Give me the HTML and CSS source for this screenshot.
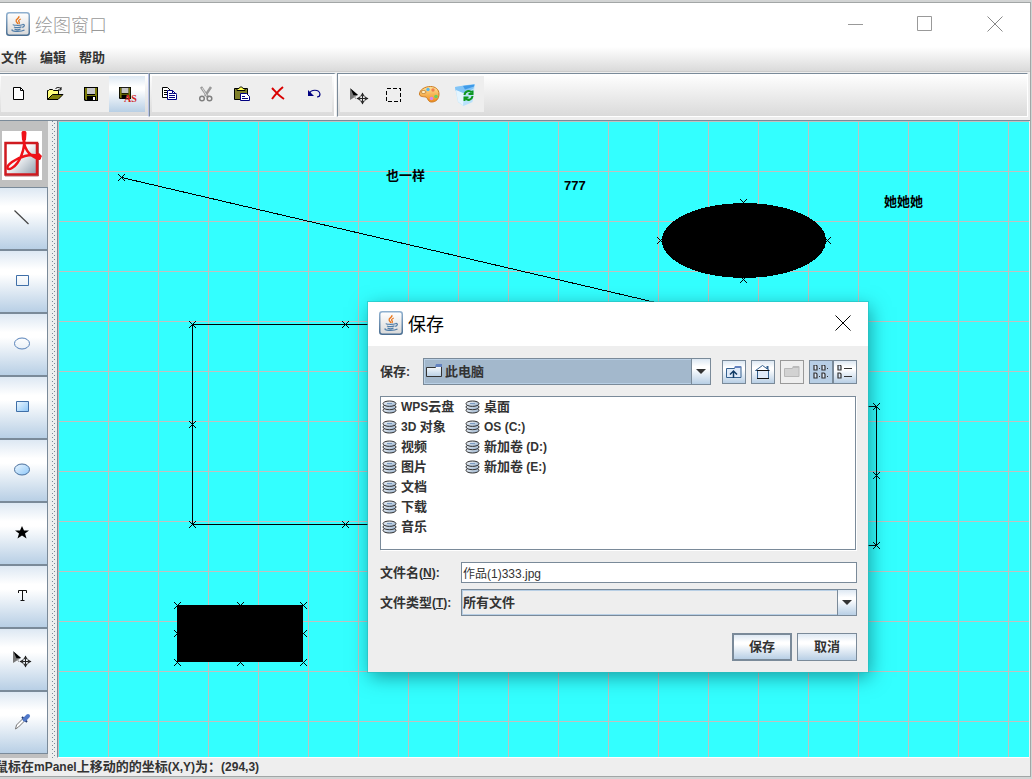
FILE: index.html
```html
<!DOCTYPE html>
<html lang="zh-CN">
<head>
<meta charset="utf-8">
<meta name="viewport" content="width=device-width, initial-scale=1">
<title>绘图窗口</title>
<link rel="stylesheet" href="styles.css">
</head>
<body>
<svg class="defs" width="0" height="0" aria-hidden="true">
  <defs>
    <linearGradient id="g-steel" x1="0" y1="0" x2="0" y2="1"><stop offset="0" stop-color="#8fb0cf"/><stop offset="1" stop-color="#4a6e92"/></linearGradient>
    <linearGradient id="g-tile" x1="0" y1="0" x2="0" y2="1"><stop offset="0" stop-color="#fff"/><stop offset="1" stop-color="#d8d8d8"/></linearGradient>
    <linearGradient id="g-folder" x1="0" y1="0" x2="0" y2="1"><stop offset="0" stop-color="#fff"/><stop offset="1" stop-color="#b8cfe5"/></linearGradient>
    <linearGradient id="g-sky" x1="0" y1="0" x2="1" y2="1"><stop offset="0" stop-color="#eef8ff"/><stop offset="1" stop-color="#8cc6f8"/></linearGradient>
    <linearGradient id="g-pdf" x1="0" y1="0" x2="1" y2="1"><stop offset=".4" stop-color="#fff"/><stop offset="1" stop-color="#8d9dab"/></linearGradient>
    <linearGradient id="g-disk" x1="0" y1="0" x2="1" y2="1"><stop offset="0" stop-color="#fff"/><stop offset="1" stop-color="#8fabc9"/></linearGradient>
    <linearGradient id="g-orange" x1="0" y1="0" x2="0" y2="1"><stop offset="0" stop-color="#ffe39a"/><stop offset="1" stop-color="#f08a18"/></linearGradient>
    <symbol id="java" viewBox="0 0 24 24">
      <rect x=".75" y=".75" width="22.5" height="22.5" rx="2.5" fill="url(#g-tile)" stroke="url(#g-steel)" stroke-width="1.5"/>
      <path d="M12.8 4c1.5 2.2-3.800 3-2.600 5.400.4.900 1.400 1.300 1.500 2.600M14.800 7c-2.400 1-2.600 2-1.600 3.200.4.600.2 1.200-.4 1.700" fill="none" stroke="#e8751a" stroke-width="1.300"/>
      <path d="M7.500 12.500c-2 .8 6 1.200 9 .2M8 14.900c1.500.9 5.500.9 7.500 0M8.500 17c1.500.8 4.500.8 6 0M6.500 17.600c-3 1.700 8 2.700 12 .4M16.500 12.500c3-.4 2 2.400-.3 2.900" fill="none" stroke="#4e7ca8" stroke-width="1.200"/>
    </symbol>
    <symbol id="move" viewBox="0 0 36 36">
      <path d="M10 12v12l8-5z" fill="#777"/><path d="M10.500 12.500l7.500 6.500-4.500.2z" fill="#000"/><path d="M14 20l2 3" stroke="#999"/>
      <path d="M22.500 17v11M17 22.500h11" stroke="#222" fill="none"/>
      <path d="M20.500 20l2-3.500 2 3.500zM20.500 25l2 3.500 2-3.500zM20 20.500l-3.500 2 3.500 2zM25 20.500l3.500 2-3.500 2z" fill="#222"/>
      <circle cx="22.500" cy="22.500" r="3" fill="none" stroke="#444" stroke-width=".7"/>
    </symbol>
    <symbol id="floppy" viewBox="0 0 14 14">
      <path d="M0 0h14v14h-13l-1-1z" fill="#000"/><path d="M1 1h2v7h8v-7h2v12h-11l-1-1z" fill="#7b7b08"/>
      <rect x="3" y="1" width="8" height="6" fill="#c6c6c6"/><path d="M3 9h9v5h-9z" fill="#000"/><path d="M9 10h2v3h-2z" fill="#fff"/>
    </symbol>
    <symbol id="drive" viewBox="0 0 16 14">
      <ellipse cx="7.500" cy="10.300" rx="6.500" ry="2.700" fill="url(#g-disk)" stroke="#333"/>
      <ellipse cx="7.500" cy="7" rx="6.500" ry="2.700" fill="url(#g-disk)" stroke="#333"/>
      <ellipse cx="7.500" cy="3.700" rx="6.500" ry="2.700" fill="url(#g-disk)" stroke="#333"/>
      <path d="M5 3.500h5" stroke="#7a9ac0"/>
    </symbol>
    <symbol id="x" viewBox="0 0 7 7"><path d="M0 0l7 7M7 0l-7 7" stroke="#000" fill="none"/></symbol>
  </defs>
</svg>

<main class="window">
  <header class="titlebar">
    <svg class="app-icon" width="24" height="24" aria-hidden="true"><use href="#java"/></svg>
    <h1>绘图窗口</h1>
    <div class="window-controls">
      <button type="button" aria-label="最小化"><svg width="16" height="16"><path d="M1 8.500h15" stroke="#999"/></svg></button>
      <button type="button" aria-label="最大化"><svg width="16" height="16"><path d="M.5.5h14v14h-14z" fill="none" stroke="#999"/></svg></button>
      <button type="button" aria-label="关闭"><svg width="16" height="16"><path d="M.5.5l15 15M15.500.5l-15 15" stroke="#888"/></svg></button>
    </div>
  </header>

  <nav class="menubar" aria-label="菜单">
    <button type="button">文件</button><button type="button">编辑</button><button type="button">帮助</button>
  </nav>

  <div class="toolbars">
    <div class="toolbar toolbar-file">
      <button type="button" aria-label="新建"><svg width="36" height="36"><path d="M12.500 11.500h7l3 3v9h-10z" fill="#fff" stroke="#000"/><path d="M19.500 11.500v3h3" fill="none" stroke="#000"/></svg></button>
      <button type="button" aria-label="打开"><svg width="36" height="36"><path d="M10.500 23.500v-9h1l1-1h3l1 1h5v4" fill="#ffff7a" stroke="#000"/><path d="M10.500 23.500l5-5h10.500l-5 5z" fill="#80800a" stroke="#000"/><path d="M18.500 13c1-2 4-2 5.500 0m0-2v3h-3" fill="none" stroke="#000"/></svg></button>
      <button type="button" aria-label="保存"><svg width="36" height="36"><use href="#floppy" x="11" y="11" width="14" height="14"/></svg></button>
      <button type="button" class="is-hot" aria-label="另存为"><svg width="36" height="36"><use href="#floppy" x="10" y="11" width="12" height="12"/><text x="15" y="26" class="as-mark">AS</text></svg></button>
    </div>
    <div class="toolbar toolbar-edit">
      <button type="button" aria-label="复制"><svg width="36" height="36"><path d="M10.500 11.500h5l3 3v7h-8z" fill="#fff" stroke="#000"/><path d="M12 14.500h3M12 16.500h4M12 18.500h4" stroke="#000"/><path d="M15.500 14.500h5l4 4v5h-9z" fill="#fff" stroke="#000080"/><path d="M17 17.500h3M17 19.500h6M17 21.500h6M20.500 14.500v3h4" fill="none" stroke="#000080"/></svg></button>
      <button type="button" disabled aria-label="剪切"><svg width="36" height="36"><path d="M13 11l7 10M23 11l-6 9" stroke="#999" stroke-width="2.500"/><path d="M14 12l5 8" stroke="#ddd"/><circle cx="14" cy="22.500" r="2.300" fill="none" stroke="#808080" stroke-width="1.500"/><circle cx="21.500" cy="22.500" r="2.300" fill="none" stroke="#808080" stroke-width="1.500"/></svg></button>
      <button type="button" aria-label="粘贴"><svg width="36" height="36"><path d="M10.500 12.500h13v11h-13z" fill="#80802a" stroke="#000"/><path d="M13 14.500v-2h2c0-2 4-2 4 0h2v2z" fill="#ffff5a" stroke="#000"/><path d="M16.500 17.500h6l3 3v4h-9z" fill="#fff" stroke="#000080"/><path d="M18 20.500h3M18 22.500h6" stroke="#000080"/></svg></button>
      <button type="button" aria-label="删除"><svg width="36" height="36"><path d="M12 12c3 3 7 8 12 11M23 11c-5 4-8 8-11 12" fill="none" stroke="#d90000" stroke-width="2"/></svg></button>
      <button type="button" aria-label="撤销"><svg width="36" height="36"><path d="M13 18c2-5 10-5 11 0 0 2-1 3-3 3" fill="none" stroke="#000080" stroke-width="1.200"/><path d="M12 14v6h6z" fill="#000080"/></svg></button>
    </div>
    <div class="toolbar toolbar-draw">
      <button type="button" aria-label="移动"><svg width="36" height="36"><use href="#move"/></svg></button>
      <button type="button" aria-label="选取"><svg width="36" height="36"><path d="M10.500 12.500h14v13h-14z" fill="none" stroke="#000" stroke-dasharray="4 2" shape-rendering="crispEdges"/></svg></button>
      <button type="button" aria-label="调色板"><svg width="36" height="36"><path d="M7.500 18c0-4 5-7.500 11-7.500 5 0 8.500 3 8.500 7.500 0 5-3 8-7.500 8-4 0-3-4-6-5-2-.5-6 0-6-3z" fill="url(#g-orange)" stroke="#cc7a20"/><ellipse cx="11.500" cy="16" rx="2.500" ry="1.500" fill="#fff0c8" stroke="#b87828" stroke-width=".8"/><circle cx="16" cy="13.500" r="1.700" fill="#58b8f0"/><circle cx="21" cy="14" r="1.700" fill="#f08050"/><circle cx="24" cy="20.500" r="1.800" fill="#68d060"/><circle cx="19.500" cy="22.500" r="1.800" fill="#d888e8"/></svg></button>
      <button type="button" aria-label="回收站"><svg width="36" height="36"><path d="M7 11l9-1.500 11-1.500-2.500 18-9 4-5.500-4z" fill="#b9e2fb"/><path d="M7 11l12-2 7.500-.5-1 4-9 5-9-3z" fill="#82c4f6"/><path d="M15 10l11.500-1.500-.5 2-9 3z" fill="#3f9ae8"/><path d="M8 14l8 3.500-1 12-5-4z" fill="#e4f5ff"/><path d="M16.500 19c.5-4 5-5 7-2.500M24.500 14.500v3.500h-4M24.500 20c-.5 4-5 5-7 2.500M16.500 25v-3.500h4" fill="none" stroke="#109820" stroke-width="2"/></svg></button>
    </div>
  </div>

  <div class="workspace">
    <aside class="palette" aria-label="绘图工具">
      <button type="button" class="pdf" aria-label="PDF"><svg width="40" height="49"><path fill="#fff" d="M0 0h40v49H0z"/><path d="M3.500 12h31.500v31.500h-31.500z" fill="url(#g-pdf)" stroke="#cf1a20" stroke-width="2.500"/><path d="M3 45h33.500v-33" fill="none" stroke="#8d1018" stroke-opacity=".6"/><path d="M22 3c-2 8 2 19 10 23 5 3 8 1 4-1-7-3-19 1-26 6-7 5-5 9 0 6 7-4 14-18 12-34" fill="none" stroke="#ef1118" stroke-width="2.500"/><path d="M19.500 2c0-3 5-3 5 0l-.5 7h-4zM32 24l5-2 3 3-2 4-5-1z" fill="#ef1118"/></svg></button>
      <button type="button" aria-label="直线"><svg width="36" height="36"><path d="M10.500 11.500l14 13.500" stroke="#444" stroke-width="1.200"/></svg></button>
      <button type="button" aria-label="矩形"><svg width="36" height="36"><path d="M12.500 13.500h12v10h-12z" fill="none" stroke="#3f6fa8"/></svg></button>
      <button type="button" aria-label="椭圆"><svg width="36" height="36"><ellipse cx="18" cy="18.500" rx="7.500" ry="5.500" fill="none" stroke="#5580b8"/></svg></button>
      <button type="button" aria-label="实心矩形"><svg width="36" height="36"><path d="M12.500 13.500h12v10h-12z" fill="url(#g-sky)" stroke="#3f6fa8"/></svg></button>
      <button type="button" aria-label="实心椭圆"><svg width="36" height="36"><ellipse cx="18" cy="18.500" rx="7.500" ry="5.500" fill="url(#g-sky)" stroke="#486e9c"/></svg></button>
      <button type="button" aria-label="星形"><svg width="36" height="36"><path d="M18 12l2 4.500h5l-4 3 1.500 5-4.500-3-4.500 3 1.500-5-4-3h5z" fill="#000"/></svg></button>
      <button type="button" aria-label="文字"><svg width="36" height="36"><path d="M14.500 16v-2.500h8v2.500M18.500 13.500v10M16.500 23.500h4" fill="none" stroke="#111"/></svg></button>
      <button type="button" aria-label="移动图形"><svg width="36" height="36"><use href="#move" x="-1" y="-1"/></svg></button>
      <button type="button" aria-label="取色"><svg width="36" height="36"><path d="M11.500 26l1-4 6-6 2 2-6 6z" fill="#fff" stroke="#777"/><path d="M18 14l5 5" stroke="#223a70" stroke-width="2"/><path d="M20.500 16.500l3.500-3.500" stroke="#5078c8" stroke-width="4" stroke-linecap="round"/></svg></button>
    </aside>
    <div class="splitter"></div>
    <section class="canvas" aria-label="画布">
      <svg width="100%" height="100%">
        <defs><pattern id="grid" width="50" height="50" patternUnits="userSpaceOnUse"><path d="M0 .5h50M.5 0v50" stroke="#c0c0c0" shape-rendering="crispEdges"/></pattern></defs>
        <rect width="100%" height="100%" fill="url(#grid)"/>
        <g fill="none" stroke="#000" shape-rendering="crispEdges">
          <path d="M63.500 56.500L632 189.500"/>
          <path d="M134.500 203.500h306v200h-306z"/>
          <path d="M700.500 285.500h118v139h-118z"/>
        </g>
        <g shape-rendering="crispEdges">
          <use href="#x" x="60" y="53" width="7" height="7"/>
          <use href="#x" x="131" y="200" width="7" height="7"/><use href="#x" x="284" y="200" width="7" height="7"/>
          <use href="#x" x="131" y="300" width="7" height="7"/>
          <use href="#x" x="131" y="400" width="7" height="7"/><use href="#x" x="284" y="400" width="7" height="7"/>
          <use href="#x" x="815" y="282" width="7" height="7"/><use href="#x" x="815" y="351" width="7" height="7"/><use href="#x" x="815" y="421" width="7" height="7"/>
          <use href="#x" x="682" y="78" width="7" height="7"/><use href="#x" x="682" y="155" width="7" height="7"/>
          <use href="#x" x="599" y="116" width="7" height="7"/><use href="#x" x="766" y="116" width="7" height="7"/>
          <ellipse cx="686" cy="119.500" rx="82" ry="37.500"/>
          <use href="#x" x="116" y="481" width="7" height="7"/><use href="#x" x="179" y="481" width="7" height="7"/><use href="#x" x="242" y="481" width="7" height="7"/>
          <use href="#x" x="116" y="509" width="7" height="7"/><use href="#x" x="242" y="509" width="7" height="7"/>
          <use href="#x" x="116" y="538" width="7" height="7"/><use href="#x" x="179" y="538" width="7" height="7"/><use href="#x" x="242" y="538" width="7" height="7"/>
          <rect x="119" y="484" width="126" height="57"/>
        </g>
        <text class="note" x="328" y="59">也一样</text>
        <text class="note" x="506" y="69">777</text>
        <text class="note" x="826" y="85">她她她</text>
      </svg>
    </section>
  </div>

  <footer class="status"><p><span class="han">鼠标在</span>mPanel<span class="han">上移动的的坐标</span>(X,Y)<span class="han">为：</span>(294,3)</p></footer>
</main>

<section class="dialog" role="dialog" aria-labelledby="dialog-title">
  <header class="dialog-title">
    <svg width="24" height="24" aria-hidden="true"><use href="#java"/></svg>
    <h2 id="dialog-title">保存</h2>
    <button type="button" aria-label="关闭"><svg width="16" height="16"><path d="M.5.5l15 15M15.500.5l-15 15" stroke="#000"/></svg></button>
  </header>
  <form class="dialog-body">
    <div class="location">
      <label for="place"><span class="han">保存</span>:</label>
      <div class="combo combo-place">
        <svg class="folder" width="17" height="14" aria-hidden="true"><path d="M.5 3.500h9l2-2h4v11h-15z" fill="url(#g-folder)" stroke="#333"/><path d="M10 0h6v3h-7z" fill="#6382bf"/></svg>
        <select id="place"><option>此电脑</option></select>
        <span class="arrow"><svg width="10" height="5"><path d="M0 0h10l-5 5z" fill="#333"/></svg></span>
      </div>
      <div class="tools">
        <button type="button" aria-label="向上"><svg width="16" height="14"><path d="M.5 3.500h8l2-2h4.500v11h-14.500z" fill="#dfeaf8" stroke="#35618f"/><path d="M9 1h6v2h-7z" fill="#6382bf"/><path d="M7.500 13v-6M4 9.500l3.500-3.500 3.500 3.500" fill="none" stroke="#123c66" stroke-width="1.500"/></svg></button>
        <button type="button" aria-label="主目录"><svg width="16" height="14"><path d="M.5 5.500l7-5 7 5z" fill="#fff" stroke="#35618f"/><path d="M2.500 5.500h11v8h-11z" fill="#dfeaf8" stroke="#35618f"/><path d="M2 13.500h12M2 5.500h12" stroke="#111"/><path d="M12.500 1v3" stroke="#35618f" stroke-width="2"/></svg></button>
        <button type="button" disabled aria-label="新建文件夹"><svg width="16" height="14"><path d="M.5 3.500h8l2-2h4.500v10h-14.500z" fill="#d2d2d2" stroke="#b8b8b8"/><path d="M9 1h6v2h-7z" fill="#bbb"/></svg></button>
        <span class="view">
          <button type="button" class="is-on" aria-label="列表"><svg width="16" height="14"><path d="M1 0h2l1 1v4h-3zM9 0h2l1 1v4h-3zM1 8h2l1 1v4h-3zM9 8h2l1 1v4h-3z" fill="#dfeaf8" stroke="#333" stroke-width="1.200"/><path d="M6 3.500h1M14 3.500h1M6 11.500h1M14 11.500h1" stroke="#333"/></svg></button>
          <button type="button" aria-label="详细信息"><svg width="16" height="14"><path d="M1 0h2l1 1v4h-3zM1 8h2l1 1v4h-3z" fill="#dfeaf8" stroke="#333" stroke-width="1.200"/><path d="M7 3.500h8M7 11.500h8" stroke="#333"/></svg></button>
        </span>
      </div>
    </div>

    <ul class="files">
      <li><svg width="16" height="14"><use href="#drive"/></svg><span>WPS<span class="han">云盘</span></span></li>
      <li><svg width="16" height="14"><use href="#drive"/></svg><span>3D <span class="han">对象</span></span></li>
      <li><svg width="16" height="14"><use href="#drive"/></svg><span class="han">视频</span></li>
      <li><svg width="16" height="14"><use href="#drive"/></svg><span class="han">图片</span></li>
      <li><svg width="16" height="14"><use href="#drive"/></svg><span class="han">文档</span></li>
      <li><svg width="16" height="14"><use href="#drive"/></svg><span class="han">下载</span></li>
      <li><svg width="16" height="14"><use href="#drive"/></svg><span class="han">音乐</span></li>
      <li><svg width="16" height="14"><use href="#drive"/></svg><span class="han">桌面</span></li>
      <li><svg width="16" height="14"><use href="#drive"/></svg><span>OS (C:)</span></li>
      <li><svg width="16" height="14"><use href="#drive"/></svg><span><span class="han">新加卷</span> (D:)</span></li>
      <li><svg width="16" height="14"><use href="#drive"/></svg><span><span class="han">新加卷</span> (E:)</span></li>
    </ul>

    <div class="fields">
      <label for="name"><span class="han">文件名</span>(<u>N</u>):</label>
      <input id="name" type="text" value="作品(1)333.jpg">
      <label for="type"><span class="han">文件类型</span>(<u>T</u>):</label>
      <div class="combo">
        <select id="type"><option>所有文件</option></select>
        <span class="arrow"><svg width="10" height="5"><path d="M0 0h10l-5 5z" fill="#333"/></svg></span>
      </div>
    </div>

    <div class="actions">
      <button type="submit" class="default">保存</button>
      <button type="button">取消</button>
    </div>
  </form>
</section>
</body>
</html>
```

FILE: styles.css
```css
:root {
  --edge: #7a8a99;
  --panel: #eeeeee;
  --text: #333333;
  --metal: linear-gradient(#dde8f3, #ffffff 30%, #ffffff 38%, #b8cfe5);
  --bar: linear-gradient(#ffffff, #dadada);
}

* { box-sizing: border-box; }

body {
  margin: 0;
  height: 100vh;
  padding: 2px 1px 2px 0;
  background: #d2d4d4;
  color: var(--text);
  font: bold 12px/16px "Liberation Sans", "Noto Sans CJK SC", sans-serif;
  overflow: hidden;
}

button, input, select { font: inherit; color: inherit; margin: 0; border-radius: 0; }
button { padding: 0; border: 0; background: none; }
svg { display: block; flex: none; }
.defs { position: absolute; }
.han { font-size: 13px; }

/* Main window */
.window {
  display: flex;
  flex-direction: column;
  height: 100%;
  background: var(--panel);
  border: 1px solid #a2a6a6;
  border-left: 0;
}

.titlebar {
  display: flex;
  align-items: center;
  height: 44px;
  padding: 0 0 2px 6px;
  gap: 5px;
  background: #fff;
}
h1, h2 {
  margin: 0;
  font: 400 18px/24px "Noto Sans CJK SC", sans-serif;
}
h1 { color: #999; font-weight: 300; }
h2 { color: #000; }
.window-controls { display: flex; margin-left: auto; }
.window-controls button { width: 70px; display: grid; place-items: center; }

.menubar {
  display: flex;
  height: 25px;
  gap: 13px;
  padding-left: 1px;
  background: var(--bar);
  border-bottom: 1px solid #ccc;
}
.menubar button { font-size: 13px; height: 22px; }

.toolbars { display: flex; padding: 1px 2px 3px 0; }
.toolbar {
  display: flex;
  height: 44px;
  padding-top: 2px;
  background: var(--bar);
  border-top: 1px solid var(--edge);
  border-bottom: 1px solid #fff;
}
.toolbar button { width: 36px; height: 36px; background: var(--panel); }
.toolbar button.is-hot { background: var(--metal); }
.toolbar-file { padding-left: 1px; padding-right: 3px; border-right: 1px solid #b9c3e8; }
.toolbar-edit { padding-left: 2px; padding-right: 2px; border-left: 1px solid var(--edge); border-right: 2px solid #fff; }
.toolbar-draw { flex: 1; padding-left: 2px; margin-left: 1px; border-left: 1px solid var(--edge); border-right: 1px solid #fff; }
.as-mark { font: bold 10px "Liberation Serif", serif; fill: #d02020; }

.workspace {
  flex: 1;
  min-height: 0;
  display: flex;
  padding-right: 1px;
  border-top: 1px solid var(--edge);
}
.palette {
  flex: none;
  display: flex;
  flex-direction: column;
  width: 48px;
  background: #c0c0c0;
  overflow: hidden;
}
.palette button {
  flex: none;
  display: grid;
  place-items: center;
  height: 63px;
  padding: 0 3px 3px 0;
  background: var(--metal);
  border: solid var(--edge);
  border-width: 1px 1px 1px 0;
}
.palette .pdf { height: 66px; background: none; border: 0; padding: 2px 4px 0 0; }

/* Staggered grip dots */
.splitter {
  flex: none;
  width: 9px;
  margin-left: 1px;
  padding: 0 2px 0 3px;
  background:
    conic-gradient(from 270deg at 1px 1px, var(--edge) 25%, transparent 0) 0 0 / 4px 4px content-box,
    conic-gradient(from 270deg at 1px 1px, var(--edge) 25%, transparent 0) 2px 2px / 4px 4px content-box;
}
.canvas {
  flex: 1;
  min-width: 0;
  background: #33ffff;
  border-bottom: 1px solid #fff;
  border-left: 1px solid var(--edge);
  margin-left: -1px;
}
.note {
  font: bold 13px "Liberation Sans", "Noto Sans CJK SC", sans-serif;
  fill: #000;
}

.status { height: 18px; overflow: hidden; }
.status p { margin: 0 0 0 -5px; line-height: 18px; white-space: nowrap; }

/* Save dialog floating over the window */
.dialog {
  position: absolute;
  left: 368px;
  top: 302px;
  width: 500px;
  background: var(--panel);
  box-shadow: 0 0 0 1px rgba(40, 190, 190, .6), 2px 5px 18px rgba(0, 60, 70, .5);
}
.dialog-title {
  display: flex;
  align-items: center;
  gap: 5px;
  height: 44px;
  padding: 0 17px 2px 11px;
  background: #fff;
}
.dialog-title button { margin-left: auto; }
.dialog-body { padding: 12px 11px 11px 12px; }

.location { display: flex; align-items: center; margin-bottom: 11px; }
.location label { width: 43px; }
.tools { display: flex; gap: 5px; margin-left: 11px; }
.tools button {
  display: grid;
  place-items: center;
  width: 24px;
  height: 24px;
  background: var(--metal);
  border: 1px solid var(--edge);
}
.tools button:disabled { background: var(--panel); border-color: #999; }
.tools .is-on { background: #b8cfe5; }
.view { display: flex; }

.combo { position: relative; height: 27px; }
.combo-place { flex: 1; }
.combo select {
  appearance: none;
  display: block;
  width: 100%;
  height: 100%;
  padding: 0 20px 0 1px;
  background: var(--panel);
  border: 1px solid var(--edge);
  box-shadow: inset 0 0 0 1px #b8cfe5;
  font-size: 13px;
}
.combo-place select { padding-left: 21px; background: #a3b8cc; }
.combo .folder { position: absolute; left: 3px; top: 6px; }
.arrow {
  position: absolute;
  right: 0;
  top: 0;
  display: grid;
  place-items: center;
  width: 20px;
  height: 100%;
  background: var(--metal);
  border: 1px solid var(--edge);
  pointer-events: none;
}

.files {
  display: grid;
  grid-template-rows: repeat(7, 20px);
  grid-auto-columns: 83px;
  grid-auto-flow: column;
  height: 154px;
  margin: 0 1px 12px 0;
  padding: 0 1px;
  list-style: none;
  background: #fff;
  border: 1px solid var(--edge);
  box-shadow: 1px 1px #fff;
}
.files li { display: flex; align-items: center; gap: 3px; white-space: nowrap; }

.fields {
  display: grid;
  grid-template-columns: 81px 1fr;
  align-items: center;
  row-gap: 6px;
}
.fields input {
  width: 100%;
  height: 21px;
  padding: 0 1px;
  background: #fff;
  border: 1px solid var(--edge);
  font-weight: 400;
}

.actions { display: flex; justify-content: flex-end; gap: 5px; margin-top: 17px; }
.actions button {
  width: 60px;
  height: 28px;
  background: var(--metal);
  border: 1px solid var(--edge);
  font-size: 13px;
}
.actions .default { border-width: 2px; }
```
